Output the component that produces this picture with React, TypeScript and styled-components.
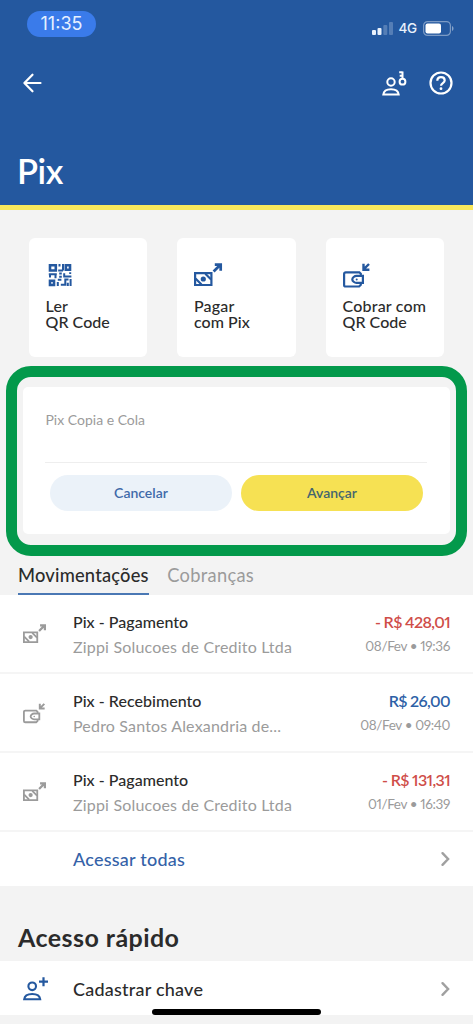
import React from "react";
import styled, { createGlobalStyle } from "styled-components";

const blue = "#24589f";
const gray = "#9b9b9b";

const GlobalStyle = createGlobalStyle`
  * { box-sizing: border-box; }
  html, body { margin: 0; background: #f3f3f3; }
  body { font-family: Lato, "Liberation Sans", sans-serif; color: #2b2b2b; }
  button { font: inherit; border: 0; padding: 0; background: none; color: inherit; display: block; }
  svg { display: block; overflow: visible; flex: none; }
`;

const Screen = styled.main`
  position: relative;
  width: 473px;
  height: 1024px;
  overflow: hidden;
  background: #f3f3f3;
`;

const Label = styled.span<{ $size: number; $weight?: number; $color?: string; $track?: number; $line?: number }>`
  display: block;
  white-space: nowrap;
  font-size: ${(p) => p.$size}px;
  font-weight: ${(p) => p.$weight ?? 400};
  color: ${(p) => p.$color ?? "inherit"};
  letter-spacing: ${(p) => p.$track ?? 0}px;
  line-height: ${(p) => p.$line ?? 20}px;
  font-variant-numeric: proportional-nums;
`;

const Header = styled.header`
  height: 210px;
  background: ${blue};
  border-bottom: 5px solid #f8e85c;
`;

const StatusBar = styled.div`
  display: flex;
  justify-content: space-between;
  height: 56px;
  padding: 11px 19px 0 27px;
`;

const Clock = styled.div`
  width: 69px;
  height: 26px;
  border-radius: 13px;
  background: #3a7bea;
  color: #e6f0ff;
  text-align: center;
  font-family: Inter, sans-serif;
`;

const Signals = styled.div`
  display: flex;
  align-items: center;
  height: 34px;
  color: #e9f1fb;
  font-family: Inter, sans-serif;
`;

const Bars = styled.svg`
  margin-right: 5px;
`;

const Battery = styled.svg`
  margin-left: 6px;
`;

const NavBar = styled.nav`
  display: flex;
  align-items: center;
  height: 53px;
  padding: 0 20px 0 22px;
  color: #fff;
`;

const NavActions = styled.div`
  display: flex;
  align-items: center;
  gap: 22px;
  margin-left: auto;
`;

const PageTitle = styled.h1`
  margin: 0;
  padding: 42px 0 0 17px;
  color: #fff;
`;

const Shortcuts = styled.section`
  display: flex;
  gap: 30px;
  padding: 28px 29px 0 28.5px;
`;

const ShortcutCard = styled.div`
  flex: 1;
  height: 119px;
  padding: 25px 0 0 17px;
  border-radius: 6px;
  background: #fff;
`;

const ShortcutIcon = styled.div`
  height: 35px;
`;

const Highlight = styled.section`
  width: 461px;
  height: 190px;
  margin: 9px 0 0 6px;
  padding: 10px 6px 0;
  border: 11px solid #03994b;
  border-radius: 25px;
`;

const PasteCard = styled.div`
  height: 147px;
  padding: 22px 23px 0 22px;
  border-radius: 5px;
  background: #fff;
`;

const PasteField = styled.div`
  height: 54px;
  padding-left: 0.5px;
  border-bottom: 1px solid #eee;
`;

const Buttons = styled.div`
  display: flex;
  gap: 9px;
  padding: 12px 4px 0 5px;
`;

const Pill = styled.button<{ $bg: string }>`
  flex: 1;
  height: 36px;
  border-radius: 18px;
  background: ${(p) => p.$bg};
  text-align: center;
`;

const Tabs = styled.div`
  display: flex;
  gap: 18.5px;
  height: 39px;
  padding-left: 18px;
`;

const Tab = styled.div<{ $active?: boolean }>`
  height: 39px;
  padding-top: 6.5px;
  display: flex;
  border-bottom: 2px solid ${(p) => (p.$active ? "#4a78b4" : "transparent")};
`;

const List = styled.section`
  background: #fff;
`;

const Movement = styled.article`
  display: flex;
  height: 79px;
  padding: 17px 23px 0;
  border-bottom: 2px solid #f5f5f5;
`;

const MovementIcon = styled.div`
  width: 50px;
  padding-top: 12px;
`;

const Details = styled.div`
  flex: 1;
  display: grid;
  align-content: start;
  gap: 5px;
`;

const Amounts = styled(Details)`
  flex: none;
  justify-items: end;
`;

const LinkRow = styled.div<{ $height: number; $top?: number }>`
  display: flex;
  align-items: center;
  height: ${(p) => p.$height}px;
  padding: ${(p) => p.$top ?? 0}px 23px 0;
  background: #fff;
`;

const LinkIcon = styled.div`
  width: 50px;
`;

const Push = styled.div`
  margin-left: auto;
`;

const SectionTitle = styled.h2`
  margin: 0;
  height: 75px;
  padding: 35px 0 0 18px;
`;

const HomeIndicator = styled.div`
  position: absolute;
  left: 152px;
  bottom: 9px;
  width: 169px;
  height: 6px;
  border-radius: 3px;
  background: #000;
`;

const QrIcon = () => (
  <svg width="26" height="24" viewBox="-2 0 26 24" fill="none" stroke={blue}>
    <path d="M2 2.200h5.800v5.300H2zM17.800 2.200h4.200v4.500h-4.200zM2 17.800h4v4.200H2z" strokeWidth="2.600" />
    <path
      d="M11.500 1v2.600M15 1v6.400M10.200 7.400H15M.8 11.200h8M2 11.200v3.400M7.500 11.200v4M11.200 10.500h2.600M11.200 13.800h2.600M16.200 10.200v3.200h7.200M22.200 9.200v1.800M9.800 16.800h3.600M9.800 19v4M12.800 21.800h4.500v-5.200h3.200M19.800 19.800V23M22.600 16V23"
      strokeWidth="2"
    />
  </svg>
);

const PayIcon = ({ color = blue, scale = 1 }: { color?: string; scale?: number }) => (
  <svg width={28 * scale} height={24 * scale} viewBox="0 0 28 24" fill="none" stroke={color} strokeWidth="2.2">
    <path d="M1.100 10.200h16.300V22H1.100z" />
    <circle cx="9.300" cy="16" r="1.500" fill={color} />
    <path d="M1.500 15.500 7.500 21.500M11.300 10.700l5.800 5.800" />
    <path d="m19.600 8.500 6.500-6.500M20.800 1.700h5.900v6" strokeWidth="2.700" />
  </svg>
);

const ReceiveIcon = ({ color = blue, scale = 1 }: { color?: string; scale?: number }) => (
  <svg width={28 * scale} height={25 * scale} viewBox="0 0 28 25" fill="none" stroke={color} strokeWidth="2.2">
    <path d="M17.800 13v-2.200l-1.500-1.500H2.700a1.600 1.600 0 0 0-1.600 1.600v11a1.600 1.600 0 0 0 1.600 1.600h13.400l1.700-1.700V20" />
    <path d="M19.900 12.800h-6.400c-2 0-4.200 2-4.200 3.600s2.200 3.500 4.200 3.500h6.400z" />
    <circle cx="13.700" cy="16.400" r="1" fill={color} stroke="none" />
    <path d="M26 1 20.800 6.200M20.500.8v5.900h5.900" strokeWidth="2.400" />
  </svg>
);

const Chevron = () => (
  <svg width="9" height="14" viewBox="0 0 9 14" fill="none" stroke="#a0a0a0" strokeWidth="2.400">
    <path d="m1.500 1.200 5.600 5.800-5.600 5.800" strokeLinecap="round" />
  </svg>
);

const BackIcon = () => (
  <svg width="20" height="20" viewBox="0 0 20 20" fill="none" stroke="currentColor" strokeWidth="2.200">
    <path d="M18.500 10H2.700M10.500 1.700 2.400 10l8.100 8.300" strokeLinecap="round" strokeLinejoin="round" />
  </svg>
);

const KeyUserIcon = () => (
  <svg width="25" height="26" viewBox="0 0 25 26" fill="none" stroke="currentColor" strokeWidth="2">
    <circle cx="9" cy="12" r="3.700" />
    <path d="M1.300 24.600c.4-3.500 3.300-5.300 7.700-5.300s7.300 1.800 7.700 5.300z" />
    <circle cx="20.500" cy="11.700" r="2.900" />
    <path d="M20.500 8.800V1.600M20.500 2.300h-3.300M20.500 5.800h-2.800" />
  </svg>
);

const HelpIcon = () => (
  <svg width="24" height="24" viewBox="0 0 24 24" fill="none" stroke="currentColor" strokeWidth="2.200">
    <circle cx="12" cy="12" r="10.500" />
    <path d="M8.300 9.700c0-2.100 1.600-3.600 3.700-3.600s3.700 1.400 3.700 3.300c0 2.600-3.700 2.700-3.700 5.300" />
    <circle cx="12" cy="17.700" r="1.400" fill="currentColor" stroke="none" />
  </svg>
);

const AddUserIcon = () => (
  <svg width="26" height="24" viewBox="0 0 26 24" fill="none" stroke={blue} strokeWidth="2.100">
    <circle cx="9.200" cy="9.300" r="3.800" />
    <path d="M1.200 22.300c.4-3.500 3.500-5.300 8-5.300s7.600 1.800 8 5.300z" />
    <path d="M20.500.2v9M16 4.700h9" strokeWidth="2.200" />
  </svg>
);

const shortcuts = [
  { first: "Ler", second: "QR Code", icon: <QrIcon /> },
  { first: "Pagar", second: "com Pix", icon: <PayIcon /> },
  { first: "Cobrar com", second: "QR Code", icon: <ReceiveIcon /> },
];

const movements = [
  { title: "Pix - Pagamento", name: "Zippi Solucoes de Credito Ltda", amount: "- R$ 428,01", date: "08/Fev • 19:36", out: true },
  { title: "Pix - Recebimento", name: "Pedro Santos Alexandria de...", amount: "R$ 26,00", date: "08/Fev • 09:40", out: false },
  { title: "Pix - Pagamento", name: "Zippi Solucoes de Credito Ltda", amount: "- R$ 131,31", date: "01/Fev • 16:39", out: true },
];

export default function App() {
  return (
    <Screen>
      <GlobalStyle />
      <Header>
        <StatusBar>
          <Clock>
            <Label $size={18} $line={26}>11:35</Label>
          </Clock>
          <Signals>
            <Bars width="21" height="13" viewBox="0 0 21 13" fill="currentColor">
              <rect x="0" y="8" width="4" height="5" rx="1" />
              <rect x="5.500" y="6" width="4" height="7" rx="1" />
              <rect x="11.300" y="3" width="4" height="10" rx="1" opacity=".25" />
              <rect x="17" y="0" width="4" height="13" rx="1" opacity=".25" />
            </Bars>
            <Label $size={13.5} $weight={500} $track={-0.2}>4G</Label>
            <Battery width="31" height="15" viewBox="0 0 31 15" fill="none">
              <rect x=".6" y=".6" width="26.800" height="13.800" rx="4" stroke="#fff" strokeOpacity=".4" strokeWidth="1.200" />
              <rect x="2.500" y="2.500" width="15.500" height="10" rx="2" fill="#fff" />
              <path d="M29 5v5c2-.7 2-4.300 0-5" fill="#fff" fillOpacity=".45" />
            </Battery>
          </Signals>
        </StatusBar>
        <NavBar>
          <BackIcon />
          <NavActions>
            <KeyUserIcon />
            <HelpIcon />
          </NavActions>
        </NavBar>
        <PageTitle>
          <Label $size={34.5} $weight={600} $line={40} $track={-0.4}>Pix</Label>
        </PageTitle>
      </Header>

      <Shortcuts>
        {shortcuts.map((s) => (
          <ShortcutCard key={s.first}>
            <ShortcutIcon>{s.icon}</ShortcutIcon>
            <Label $size={16} $weight={500} $line={16} $track={0.2}>{s.first}</Label>
            <Label $size={16} $weight={500} $line={16} $track={0.05}>{s.second}</Label>
          </ShortcutCard>
        ))}
      </Shortcuts>

      <Highlight>
        <PasteCard>
          <PasteField>
            <Label $size={14} $color={gray} $line={22}>Pix Copia e Cola</Label>
          </PasteField>
          <Buttons>
            <Pill $bg="#ebf2f9">
              <Label $size={14} $weight={600} $color="#3f6aa9">Cancelar</Label>
            </Pill>
            <Pill $bg="#f6e153">
              <Label $size={14} $weight={600} $color="#44656f">Avançar</Label>
            </Pill>
          </Buttons>
        </PasteCard>
      </Highlight>

      <Tabs>
        <Tab $active>
          <Label $size={18.3} $weight={500} $line={24} $track={0.2}>Movimentações</Label>
        </Tab>
        <Tab>
          <Label $size={18.3} $color={gray} $line={24} $track={0.3}>Cobranças</Label>
        </Tab>
      </Tabs>

      <List>
        {movements.map((m) => (
          <Movement key={m.date}>
            <MovementIcon>
              {m.out ? <PayIcon color={gray} scale={0.82} /> : <ReceiveIcon color={gray} scale={0.82} />}
            </MovementIcon>
            <Details>
              <Label $size={16} $weight={500} $track={0.03}>{m.title}</Label>
              <Label $size={16} $color={gray} $track={0.18}>{m.name}</Label>
            </Details>
            <Amounts>
              <Label $size={16} $weight={600} $track={-0.62} $color={m.out ? "#cf4d48" : "#2d5fa6"}>{m.amount}</Label>
              <Label $size={13.5} $track={-0.37} $line={19} $color={gray}>{m.date}</Label>
            </Amounts>
          </Movement>
        ))}
        <LinkRow $height={54}>
          <LinkIcon />
          <Label $size={18} $weight={500} $color="#3462a8" $track={0.23}>Acessar todas</Label>
          <Push><Chevron /></Push>
        </LinkRow>
      </List>

      <SectionTitle>
        <Label $size={25} $weight={700} $line={32} $track={0.45}>Acesso rápido</Label>
      </SectionTitle>
      <LinkRow $height={54} $top={2}>
        <LinkIcon><AddUserIcon /></LinkIcon>
        <Label $size={18} $weight={500} $track={0.23}>Cadastrar chave</Label>
        <Push><Chevron /></Push>
      </LinkRow>
      <HomeIndicator />
    </Screen>
  );
}
